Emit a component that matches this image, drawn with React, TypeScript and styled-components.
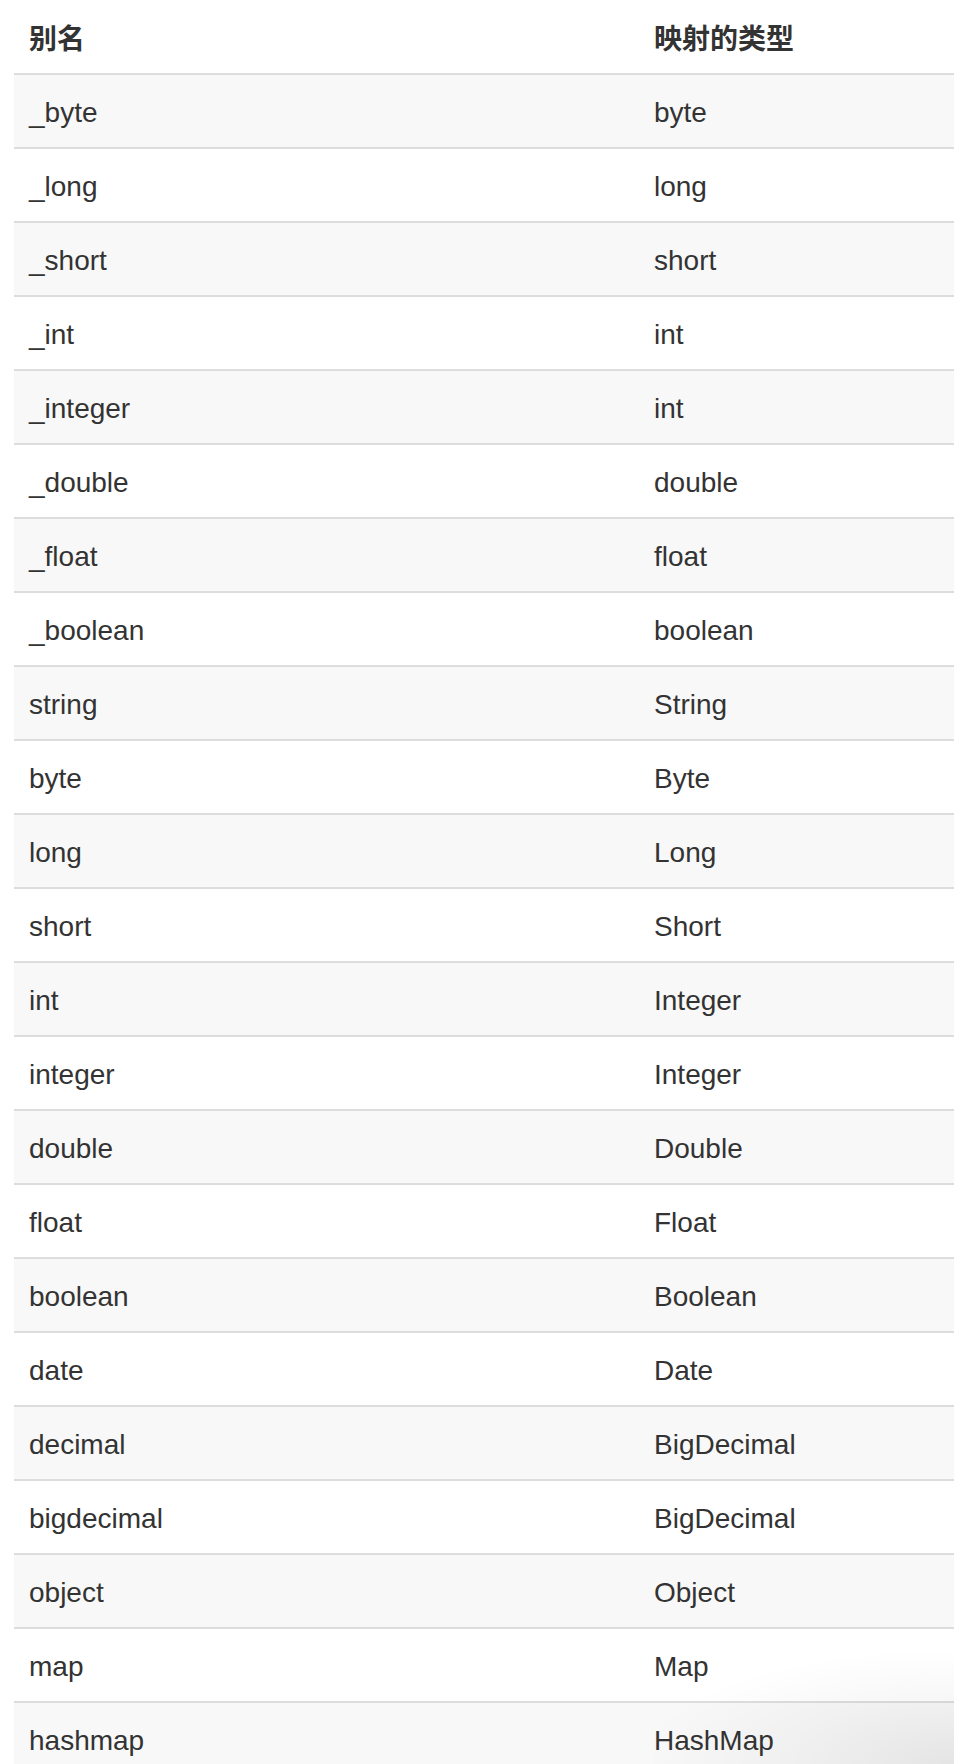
import * as React from 'react';
import styled, { createGlobalStyle } from 'styled-components';

const GlobalStyle = createGlobalStyle`
    html, body {
        margin: 0;
        padding: 0;
        background: #fff;
    }
    body {
        font-family: "Liberation Sans", "Noto Sans CJK SC", sans-serif;
        color: #333;
    }
`;

const Page = styled.div`
    position: relative;
    width: 954px;
    height: 1764px;
    overflow: hidden;
    padding-left: 14px;
    box-sizing: border-box;
`;

const Table = styled.table`
    width: 940px;
    border-collapse: collapse;
    table-layout: fixed;
    font-size: 28px;
`;

const HeadCell = styled.th`
    height: 74px;
    padding: 0 15px;
    text-align: left;
    font-weight: bold;
    font-family: "Liberation Sans", "Noto Sans CJK SC", sans-serif;
    vertical-align: middle;
    box-sizing: border-box;
`;

const Row = styled.tr<{ $striped: boolean }>`
    border-top: 2px solid #dddddd;
    background: ${({ $striped }) => ($striped ? '#f8f8f8' : '#ffffff')};
`;

const Cell = styled.td`
    height: 68px;
    padding: 4px 15px 0;
    vertical-align: middle;
    line-height: 1;
`;

// soft shadow that sits over the bottom right corner of the screenshot
const CornerShade = styled.div`
    position: absolute;
    right: 0;
    bottom: 0;
    width: 300px;
    height: 110px;
    pointer-events: none;
    background: radial-gradient(ellipse at 100% 100%, rgba(0, 0, 0, 0.08) 0%, rgba(0, 0, 0, 0.03) 40%, rgba(0, 0, 0, 0) 75%);
`;

const rows: [string, string][] = [
    ['_byte', 'byte'],
    ['_long', 'long'],
    ['_short', 'short'],
    ['_int', 'int'],
    ['_integer', 'int'],
    ['_double', 'double'],
    ['_float', 'float'],
    ['_boolean', 'boolean'],
    ['string', 'String'],
    ['byte', 'Byte'],
    ['long', 'Long'],
    ['short', 'Short'],
    ['int', 'Integer'],
    ['integer', 'Integer'],
    ['double', 'Double'],
    ['float', 'Float'],
    ['boolean', 'Boolean'],
    ['date', 'Date'],
    ['decimal', 'BigDecimal'],
    ['bigdecimal', 'BigDecimal'],
    ['object', 'Object'],
    ['map', 'Map'],
    ['hashmap', 'HashMap'],
];

export default function App() {
    return (
        <Page>
            <GlobalStyle />
            <Table>
                <colgroup>
                    <col style={{ width: 625 }} />
                    <col />
                </colgroup>
                <thead>
                    <tr>
                        <HeadCell>别名</HeadCell>
                        <HeadCell>映射的类型</HeadCell>
                    </tr>
                </thead>
                <tbody>
                    {rows.map(([alias, type], i) => (
                        <Row key={alias} $striped={i % 2 === 0}>
                            <Cell>{alias}</Cell>
                            <Cell>{type}</Cell>
                        </Row>
                    ))}
                </tbody>
            </Table>
            <CornerShade />
        </Page>
    );
}
